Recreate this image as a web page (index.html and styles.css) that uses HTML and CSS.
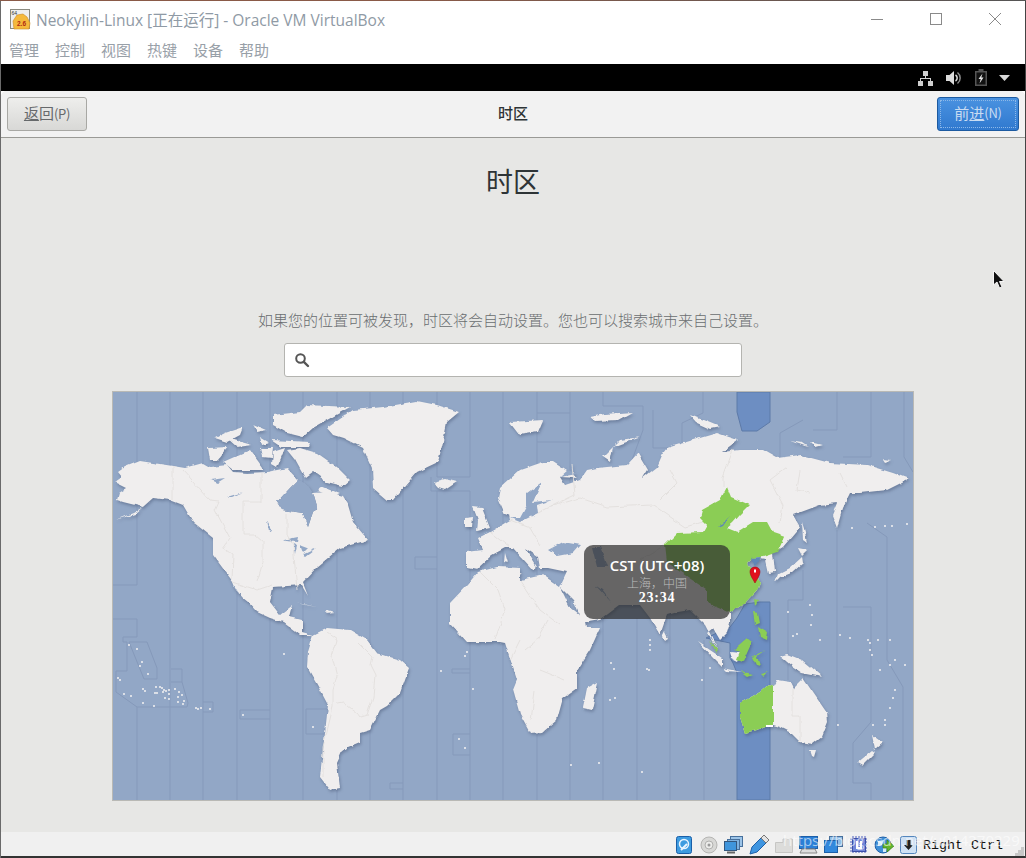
FILE: index.html
```html
<!DOCTYPE html>
<html lang="zh">
<head>
<meta charset="utf-8">
<title>Neokylin-Linux [正在运行] - Oracle VM VirtualBox</title>
<link rel="stylesheet" href="styles.css">
</head>
<body>
<div class="window">
  <header class="titlebar">
    <svg class="app-logo" width="21" height="21" viewBox="0 0 21 21">
      <rect x="0.5" y="0.5" width="19" height="19" fill="#eee" stroke="#8a8a80"/>
      <path d="M3 12 L7 6 L13 5 L17 8 L20 14 L19 20 L4 20 Z" fill="#f5b93c" stroke="#c98a20" stroke-width=".6"/>
      <text x="1.5" y="5.500" class="logo-small">64</text>
      <text x="7" y="16.500" class="logo-num">2.6</text>
    </svg>
    <span class="title-text">Neokylin-Linux [正在运行] - Oracle VM VirtualBox</span>
    <div class="win-controls">
      <svg width="14" height="14" viewBox="0 0 14 14"><path d="M1 7.500H13" class="win-stroke"/></svg>
      <svg width="14" height="14" viewBox="0 0 14 14"><rect x="1.500" y="1.500" width="11" height="11" class="win-stroke"/></svg>
      <svg width="14" height="14" viewBox="0 0 14 14"><path d="M1 1L13 13M13 1L1 13" class="win-stroke"/></svg>
    </div>
  </header>
  <nav class="menubar">
    <span>管理</span><span>控制</span><span>视图</span><span>热键</span><span>设备</span><span>帮助</span>
  </nav>
  <div class="topbar">
    <svg width="16" height="16" viewBox="0 0 16 16"><path d="M6 1h5v5H9v2h5v3h2v5h-5v-5h2V9H4v2h2v5H1v-5h2V8h5V6H6z" fill="#cfcfcf"/></svg>
    <svg width="17" height="18" viewBox="0 0 17 18"><path d="M1 6h3.500L9 2v14L4.500 12H1z" fill="#dcdcdc"/><path d="M10.500 6a3.500 3.500 0 0 1 0 6" fill="none" stroke="#dcdcdc" stroke-width="1.500"/><path d="M12.500 3.500a7 7 0 0 1 0 11" fill="none" stroke="#8d8d8d" stroke-width="1.500"/></svg>
    <svg width="14" height="17" viewBox="0 0 14 17"><path d="M4.500 0h5v2H13v15H1V2h3.500z" fill="#555"/><path d="M2.500 3.500h9v12h-9z" fill="#111"/><path d="M8.500 4.500L4.500 10h2.200L5.500 14.500l4-6H7.300z" fill="#e6e6e6"/></svg>
    <svg class="tray-arrow" width="11" height="6" viewBox="0 0 11 6"><path d="M0 0h11L5.500 6z" fill="#d8d8d8"/></svg>
  </div>
  <main class="panel">
    <div class="panel-head">
      <button class="btn btn-back"><u>返</u>回<span class="mnemonic">(P)</span></button>
      <span class="panel-title">时区</span>
      <button class="btn btn-next"><span class="focus-ring">前<u>进</u><span class="mnemonic">(N)</span></span></button>
    </div>
    <section class="content">
      <h1 class="heading">时区</h1>
      <p class="hint">如果您的位置可被发现，时区将会自动设置。您也可以搜索城市来自己设置。</p>
      <div class="search">
        <svg width="16" height="16" viewBox="0 0 16 16"><circle cx="6.500" cy="6.500" r="4.300" fill="none" stroke="#555" stroke-width="2"/><path d="M9.800 9.800L14 14" stroke="#555" stroke-width="2.400" stroke-linecap="round"/></svg>
      </div>
      <div class="map">
        <svg class="map-svg" width="800" height="408" viewBox="113 392 800 408">
          <defs>
            <filter id="coast" x="-2%" y="-2%" width="104%" height="104%" color-interpolation-filters="sRGB">
              <feTurbulence type="fractalNoise" baseFrequency="0.1" numOctaves="3" seed="7" result="noise"/>
              <feDisplacementMap in="SourceGraphic" in2="noise" scale="4" xChannelSelector="R" yChannelSelector="G" result="rough"/>
              <feDropShadow in="rough" dx="1" dy="2" stdDeviation="1.600" flood-color="#3c4b69" flood-opacity=".42"/>
            </filter>
          </defs>
          <rect x="113" y="392" width="800" height="408" class="sea"/>
          <path class="band" d="M737 392H770V422L757 431H742L737 412Z"/>
          <path class="band" d="M760 602H770V800H737V673L733 663L730 658V643L706 638L730 627L737 618L745 604Z"/>
          <path class="zones" d="M137 392V585H113M113 619H137V637H123V642H127V671H116V692L137 707V800M129 642H147L157 668V679H144ZM170 392V800M171 669H182V682H171M182 682L188 703L187 707H137M203 392V800M203 702H213V712H203M237 392V800M240 710H270M240 719H270M240 710V719M270 392V800M306 709H330M306 734H330M306 709V734M303 392V800M337 392V800M370 392V800M403 392V800M415 557H437M415 569H437M415 557V569M437 392V477M437 491V800M437 477H470M431 477V491H470M470 392V477M470 491V800M452 669H470M452 673H470M452 669V673M453 734H470M453 755H470M453 734V755M390 783H403M390 789H403M390 783V789M503 392V800M537 392V800M570 392V800M537 413H570M537 442H570M603 392V406H643V430L632 460M603 600V800M637 618V800M670 612V800M704 640V800M653 410V448H682V423L703 413V392M803 420L780 433V460M813 430H837V392M871 392V457H843M904 392V457L913 472M867 523L887 537V660L903 687V800M837 530V800M803 570V600H788V680M804 672V800M843 607H871V722L853 743V783H871V800"/>
          <g class="land">
            <path d="M115 482L127 488L119 493L117 500L123 502L143 507L133 513L115 520L135 514L153 498L170 500L183 505L193 522L213 538L213 555L233 582L236 590L243 598L248 602L257 612L270 618L283 622L300 635L313 635L308 652L307 667L320 690L328 705L325 733L320 777L330 790L340 788L337 763L342 752L348 747L360 742L360 733L370 730L380 710L387 706L400 693L409 668L400 660L377 653L367 640L350 630L327 628L313 635L302 632L302 620L290 617L293 605L280 615L270 602L273 587L302 585L308 595L303 582L317 567L340 548L368 540L353 522L348 505L343 497L327 492L313 493L317 507L313 512L308 527L303 513L282 510L277 502L290 488L298 480L287 468L267 472L247 473L233 472L227 465L210 467L203 463L185 468L173 466L140 461L125 467L118 472L122 477Z"/>
            <path d="M327 428L353 410L383 407L417 401L437 405L459 412L447 422L443 442L438 462L417 472L393 500L387 500L373 488L372 468L363 448L343 438L333 435Z"/>
            <path d="M273 415L300 412L307 405L350 407L327 420L313 428L303 437L287 433L273 425Z"/>
            <path d="M287 450L300 448L317 453L337 467L350 480L343 486L327 482L313 472L305 478L295 460Z"/>
            <path d="M320 486L340 494L333 497L318 491Z"/>
            <path d="M223 462L250 450L263 468L263 470L233 470Z"/>
            <path d="M208 448L228 447L218 460L210 460Z"/>
            <path d="M215 438L225 433L243 427L240 435L227 442ZM227 438L252 445L237 447ZM253 424L267 430L257 432ZM260 437L270 443L262 445ZM272 440L310 442L308 447L282 447ZM260 448L273 448L272 458L262 457ZM273 452L285 448L277 468L272 465Z"/>
            <path d="M433 482L445 479L457 482L445 490L438 488Z"/>
            <path d="M473 507L482 508L490 528L477 531L478 520ZM465 518L473 517L472 527L465 527Z"/>
            <path d="M510 422L543 420L538 432L520 435Z"/>
            <path d="M640 437L620 440L603 457L610 462L613 447Z"/>
            <path d="M590 417L605 414L632 412L618 420L595 421Z"/>
            <path d="M690 415L703 420L720 427L710 429L697 423Z"/>
            <path d="M467 552L483 550L478 538L490 532L510 520L508 510L513 517L505 514L498 498L500 488L520 470L543 462L553 462L578 478L560 477L565 485L580 480L587 470L597 468L627 465L638 453L648 470L643 478L657 467L663 453L667 448L693 440L717 433L738 440L722 452L740 450L763 450L777 458L800 455L830 463L867 465L893 473L909 479L887 490L860 493L850 493L843 507L837 528L832 515L837 503L820 505L793 515L800 527L783 547L773 553L775 572L768 573L765 560L753 558L748 563L760 582L757 590L745 603L730 613L730 623L727 633L720 640L713 628L707 633L718 650L705 625L690 610L678 612L667 615L660 635L650 618L640 605L620 605L600 620L583 623L573 600L560 587L567 572L548 568L540 568L538 557L525 548L537 567L533 570L513 548L505 548L492 555L477 569L467 567Z"/>
            <path d="M467 585L478 572L497 567L520 568L520 580L543 575L560 587L570 607L583 617L585 628L600 628L590 650L577 670L577 688L563 698L557 720L543 732L530 733L520 715L513 690L517 680L505 643L500 642L467 642L450 623L450 603Z"/>
            <path d="M598 682L592 710L583 708L587 688Z"/>
            <path d="M773 687L777 680L790 682L793 688L803 678L827 713L828 722L822 737L813 744L800 742L790 732L780 727L773 725L767 727L745 733L740 717L740 703L760 692L768 685Z"/>
            <path d="M809 750L815 750L813 757L811 756ZM873 750L857 763L862 766L876 752ZM872 735L883 743L875 750Z"/>
            <path d="M780 656L787 654L802 660L822 677L802 673L793 667Z"/>
            <path d="M698 642L722 658L722 667L713 658ZM722 668L742 672L725 671ZM730 652L742 653L738 662L732 659Z"/>
            <path d="M802 522L805 532L807 543L803 540ZM798 548L808 550L802 556ZM802 557L803 563L793 572L780 577L775 582L778 574L790 568Z"/>
            <path d="M665 632L668 638L665 640L663 636ZM790 441L802 443L808 447ZM810 442L822 445L815 447ZM297 603L317 607L305 605ZM327 610L334 612L325 613ZM505 553L508 563L504 562ZM518 572L522 574L517 575ZM539 574L546 575ZM553 570L558 569ZM883 459L891 460L885 462Z"/>
            <path class="water" d="M298 480L290 488L277 502L282 510L303 513L308 527L313 512L317 507L313 493L307 484ZM548 550L563 542L580 545L573 553L557 556ZM592 547L600 547L607 567L597 567ZM595 585L612 603L602 590ZM542 482L527 493L527 505L520 518L510 518L520 522L538 513L537 505L552 500L533 502L537 493ZM560 477L568 470L577 474ZM283 540L298 537L297 542L285 541ZM293 543L295 555L297 545ZM300 545L308 548L303 553ZM302 555L317 548L305 557ZM267 520L272 530L269 531ZM227 497L243 492L232 497ZM210 480L225 478L217 483ZM232 582L243 600L235 588ZM726 576L731 575Z"/>
            <path class="borders" d="M173 466V500M183 470L210 500L219 501L215 510L230 538L223 548L233 555L232 580M243 502V535H255L263 542L263 562L257 582M261 473V502H243M287 513V535L293 545L297 590M233 582L257 590L272 585M327 633L337 640L332 657L337 677L333 690L333 707L323 747L323 777M337 703L343 702L357 713L360 717L367 715L373 697L375 675L370 665L372 657L358 643M490 532L510 548M510 520L530 528L540 545M550 507L580 498L607 507L653 505L685 527L703 522M538 513L550 507L575 495L572 465M670 470L677 483L660 500M733 450L723 477V487M787 467L770 480L783 505L780 523M800 470L797 490L810 493M840 473L847 487M480 572L498 590L505 610L495 640M520 580L540 610L560 625M525 650L537 640L548 620M535 690L531 720M540 670L565 680M520 640L510 660M793 688V715H800V742M640 560L665 545"/>
            <path class="green" d="M727 487L731 497L750 505L740 515L733 523L727 528L737 532L753 522L767 522L773 533L785 537L778 552L763 557L753 558L748 563L760 582L757 590L745 603L730 613L707 603L707 590L667 563L665 545L677 533L703 532L707 525L700 518L702 510L720 500Z"/>
            <path class="green" d="M710 640L718 650L716 652ZM733 650L747 638L752 642L743 662L737 660L740 652ZM752 657L765 650L757 656L760 666L756 665ZM753 612L758 613L760 623L755 625ZM758 627L768 633L767 640L760 637ZM773 687V725L767 727L745 733L740 717L740 703L760 692L768 685ZM755 599L759 600L756 606ZM741 671L753 674L748 676ZM761 674L769 672L763 676Z"/>
            <path class="water-dark" d="M730 515L718 527L723 525ZM750 558L756 565L761 557Z"/>
            <path class="strip" d="M767 725H773V727H767Z"/>
          </g>
          <path class="dots" d="M129 645h0M137 649h0M142 662h0M140 666h0M148 674h0M118 678h0M120 680h0M143 689h0M145 691h0M124 694h0M131 696h0M156 687h0M160 687h0M162 688h0M164 690h0M166 691h0M169 690h0M175 689h0M155 693h0M157 693h0M163 692h0M169 694h0M179 692h0M182 695h0M178 697h0M165 698h0M169 699h0M178 702h0M184 701h0M183 704h0M143 703h0M154 706h0M196 708h0M198 709h0M201 708h0M210 709h0M243 715h0M284 654h0M313 727h0M441 671h0M473 689h0M459 739h0M465 748h0M467 652h0M465 656h0M611 663h0M614 669h0M647 669h0M649 670h0M650 650h0M650 645h0M650 640h0M710 668h0M702 680h0M610 700h0M615 698h0M571 765h0M599 763h0M642 772h0M788 612h0M810 605h0M812 615h0M811 625h0M793 636h0M797 634h0M820 640h0M840 635h0M850 638h0M868 640h0M878 640h0M890 640h0M870 650h0M872 655h0M880 670h0M890 665h0M895 660h0M905 665h0M895 690h0M893 698h0M890 708h0M885 720h0M838 725h0M873 725h0M885 725h0M870 643h0M852 528h0M875 527h0M885 526h0M892 526h0M907 524h0M914 522h0"/>
          <path class="pin" d="M755 567C751.500 567 750 569.500 750 572C750 575.500 753.500 580 755 583C756.500 580 760 575.500 760 572C760 569.500 758.500 567 755 567Z"/>
          <rect x="754" y="569.500" width="2" height="3" class="pin-dot"/>
        </svg>
        <div class="tooltip">
          <div class="tip-zone">CST (UTC+08)</div>
          <div class="tip-city">上海，中国</div>
          <div class="tip-time">23:34</div>
        </div>
      </div>
    </section>
    <footer class="statusbar">
      <div class="status-icons">
        <svg width="16" height="18" viewBox="0 0 16 18"><rect x=".5" y=".5" width="15" height="17" rx="2" fill="#3d9be0" stroke="#1a5fa8"/><circle cx="8" cy="8" r="4.500" fill="none" stroke="#e8f4ff" stroke-width="1.500"/><path d="M5 14L11 8" stroke="#e8f4ff" stroke-width="2"/></svg>
        <svg width="18" height="18" viewBox="0 0 18 18"><circle cx="9" cy="9" r="8" fill="#d8d8d6" stroke="#b5b5b3"/><circle cx="9" cy="9" r="4" fill="#ececea" stroke="#b0b0ae"/><circle cx="9" cy="9" r="1.500" fill="#999"/></svg>
        <svg width="19" height="18" viewBox="0 0 19 18"><rect x="6.500" y=".5" width="12" height="10" fill="#9cc4e8" stroke="#47709c"/><rect x="3.500" y="3.500" width="12" height="10" fill="#7fb2e0" stroke="#47709c"/><rect x=".5" y="5.500" width="12" height="9" fill="#3f95dc" stroke="#33577e"/><path d="M3 15.500h8v2H3z" fill="#666"/></svg>
        <svg width="20" height="20" viewBox="0 0 20 20"><path d="M1 19L3 12L12 3L17 8L8 17Z" fill="#3f95e0" stroke="#1d5fa8"/><path d="M12 3L15 0L20 5L17 8Z" fill="#e4e4e4" stroke="#777"/></svg>
        <svg width="18" height="16" viewBox="0 0 18 16"><path d="M.5 5.500H8V2H17.500V15.500H.5Z" fill="#dcdcda" stroke="#c6c6c4"/></svg>
        <svg width="19" height="18" viewBox="0 0 19 18"><rect x=".5" y=".5" width="18" height="12" fill="#2b7fd6" stroke="#1d5fa8"/><path d="M3 13h13l2 4H1z" fill="#dedede" stroke="#888"/></svg>
        <svg width="19" height="18" viewBox="0 0 19 18"><rect x="5.500" y=".5" width="13" height="10" fill="#8fbce6" stroke="#47709c"/><rect x=".5" y="4.500" width="13" height="12" fill="#3288dc" stroke="#1d5fa8"/></svg>
        <svg width="20" height="20" viewBox="0 0 20 20"><path d="M4 1V19M7 1V19M10 1V19M13 1V19M16 1V19M1 4H19M1 7H19M1 10H19M1 13H19M1 16H19" stroke="#4a5fc0" stroke-dasharray="2 1"/><rect x="3.500" y="3.500" width="13" height="13" fill="#7186d8" stroke="#3c4fa8"/><path d="M8 6V13H12V6" fill="none" stroke="#fff" stroke-width="2"/></svg>
        <svg width="20" height="20" viewBox="0 0 20 20"><circle cx="9" cy="10" r="8" fill="#3f8fd8" stroke="#1d5fa8"/><path d="M4 6L10 5L8 10L4 11ZM9 13L13 12L12 17L9 17Z" fill="#d4ecfb"/><path d="M9 9H13V5L20 11L13 17V13H9Z" fill="#62b52c" stroke="#3f7f14" stroke-width=".7"/></svg>
        <svg width="17" height="18" viewBox="0 0 17 18"><rect x=".5" y=".5" width="16" height="17" rx="2" fill="#cfe1f4" stroke="#5486bd"/><path d="M6.500 4h4v5H13L8.500 14L4 9h2.500z" fill="#222"/></svg>
      </div>
      <span class="host-key">Right Ctrl</span>
      <svg class="grip" width="9" height="9" viewBox="0 0 9 9"><path d="M6 0h3v3H6zM3 3h3v3H3zM6 3h3v3H6zM0 6h3v3H0zM3 6h3v3H3zM6 6h3v3H6z" fill="#c8c8c8"/></svg>
      <span class="watermark">https://blog.csdn.net/u014370229</span>
    </footer>
  </main>
  <svg class="mouse" width="14" height="22" viewBox="0 0 14 22"><path d="M1.500 1.500V16L5 13L7.500 19L10 18L7.500 12.500H12Z" fill="#111" stroke="#f5f5f5"/></svg>
</div>
</body>
</html>
```
FILE: styles.css
```css
* { box-sizing: border-box; }
html, body { margin: 0; padding: 0; }
body { width: 1026px; height: 858px; overflow: hidden; background: #fff; font-family: "Open Sans", "Noto Sans CJK SC", sans-serif; }
.window { position: relative; width: 1026px; height: 858px; display: flex; flex-direction: column; background: #fff; border-left: 1px solid #6a6a6a; border-right: 1px solid #444; }
.window::before { content: ""; position: absolute; left: -1px; right: -1px; top: 0; height: 1px; background: linear-gradient(90deg, #8a5a48 0, #8a5a48 40%, #555 100%); }

.titlebar { height: 39px; flex: none; display: flex; align-items: center; padding: 0 0 1px 9px; }
.app-logo { flex: none; }
.logo-small { font: 5px "Liberation Sans", sans-serif; fill: #333; }
.logo-num { font: bold 6.500px "Liberation Sans", sans-serif; fill: #b02a10; }
.title-text { margin-left: 5px; font-size: 15.500px; color: #8f9aa5; white-space: nowrap; }
.win-controls { margin-left: auto; display: flex; gap: 45px; padding-right: 23px; }
.win-stroke { fill: none; stroke: #8a8a8a; stroke-width: 1; }

.menubar { height: 25px; flex: none; display: flex; gap: 16px; padding: 0 0 5px 8px; align-items: center; font-size: 15px; color: #98a0a8; font-family: "Noto Sans CJK SC", sans-serif; }

.topbar { height: 27px; flex: none; background: #000; display: flex; align-items: center; justify-content: flex-end; padding-right: 15px; gap: 12px; }
.tray-arrow { margin-left: -1px; }

.panel { flex: 1; min-height: 0; display: flex; flex-direction: column; background: #e7e7e5; border-radius: 6px 6px 0 0; overflow: hidden; }

.panel-head { height: 47px; flex: none; background: #f2f2f2; border-bottom: 1px solid #9a9a96; display: flex; align-items: center; justify-content: space-between; padding: 0 6px; position: relative; }
.btn { height: 34px; width: 80px; border-radius: 3px; font: 15px "Noto Sans CJK SC", sans-serif; padding: 0 0 2px; margin-bottom: 1px; white-space: nowrap; }
.mnemonic { font-size: 13px; letter-spacing: -.3px; }
.btn-back { background: linear-gradient(#eeeeec, #d8d8d6); border: 1px solid #a8a8a4; color: #66696b; }
.btn-next { width: 82px; background: linear-gradient(#4a92e0, #3079cf); border: 1px solid #1c5aa0; color: #c9dcf2; padding: 2px; }
.focus-ring { display: flex; align-items: center; justify-content: center; width: 100%; height: 100%; padding-bottom: 2px; border: 1px dotted #8db8e8; }
.panel-title { position: absolute; left: 0; right: 0; top: 10px; line-height: 24px; text-align: center; font-size: 15px; font-weight: 500; color: #2e3436; font-family: "Noto Sans CJK SC", sans-serif; }

.content { flex: 1; min-height: 0; display: flex; flex-direction: column; align-items: center; }
.heading { margin: 25px 0 0; height: 36px; line-height: 36px; font-size: 27px; font-weight: 400; color: #2e3436; font-family: "Noto Sans CJK SC", sans-serif; }
.hint { margin: 111px 0 0; height: 20px; line-height: 20px; font-size: 15px; color: #6a6e70; font-weight: 300; font-family: "Noto Sans CJK SC", sans-serif; white-space: nowrap; }
.search { margin-top: 13px; width: 458px; height: 34px; background: #fff; border: 1px solid #b4b4b0; border-radius: 3px; display: flex; align-items: center; padding-left: 9px; flex: none; }
.map { position: relative; margin-top: 14px; width: 802px; height: 410px; flex: none; border: 1px solid #b9b9b5; }
.map-svg { display: block; }
.sea { fill: #92a7c6; }
.band { fill: #6d8ec2; stroke: #5d7aa8; stroke-width: 1; }
.zones { fill: none; stroke: #8599ba; stroke-width: 1; }
.land { fill: #f0eeee; filter: url(#coast); }
.water { fill: #92a7c6; }
.water-dark { fill: #5f86b8; }
.borders { fill: none; stroke: #e2dfdd; stroke-width: .9; }
.green { fill: #8bcd55; }
.strip { fill: #fff; }
.dots { fill: none; stroke: #f4f2f2; stroke-width: 2; stroke-linecap: round; }
.pin { fill: #e0101e; stroke: #a80c16; stroke-width: .6; }
.pin-dot { fill: #fff; }

.tooltip { position: absolute; left: 471px; top: 153px; width: 146px; height: 74px; border-radius: 9px; background: rgba(45, 45, 45, .71); text-align: center; padding-top: 11px; color: #fff; }
.tip-zone { font-size: 15px; line-height: 19px; font-weight: 600; font-family: "Open Sans", sans-serif; }
.tip-city { font-size: 12px; line-height: 15px; color: #bdbdbd; font-family: "Noto Sans CJK SC", sans-serif; font-weight: 300; }
.tip-time { font: bold 14px/15px "Liberation Serif", serif; letter-spacing: .8px; }

.statusbar { position: relative; flex: none; height: 26px; background: #f0f0f0; border-bottom: 2px solid #333; display: flex; align-items: center; justify-content: flex-end; padding: 2px 1px 0 0; }
.status-icons { display: grid; grid-template-columns: repeat(10, 25px); justify-items: center; align-items: center; margin-right: 2px; }
.host-key { margin-right: 12px; font: 13.330px "Liberation Mono", monospace; color: #111; white-space: nowrap; }
.grip { align-self: flex-end; }
.watermark { position: absolute; left: 782px; top: -1px; font: 15px/18px "Open Sans", sans-serif; color: rgba(255, 255, 255, .6); white-space: nowrap; }
.mouse { position: absolute; left: 991px; top: 269px; }
```
